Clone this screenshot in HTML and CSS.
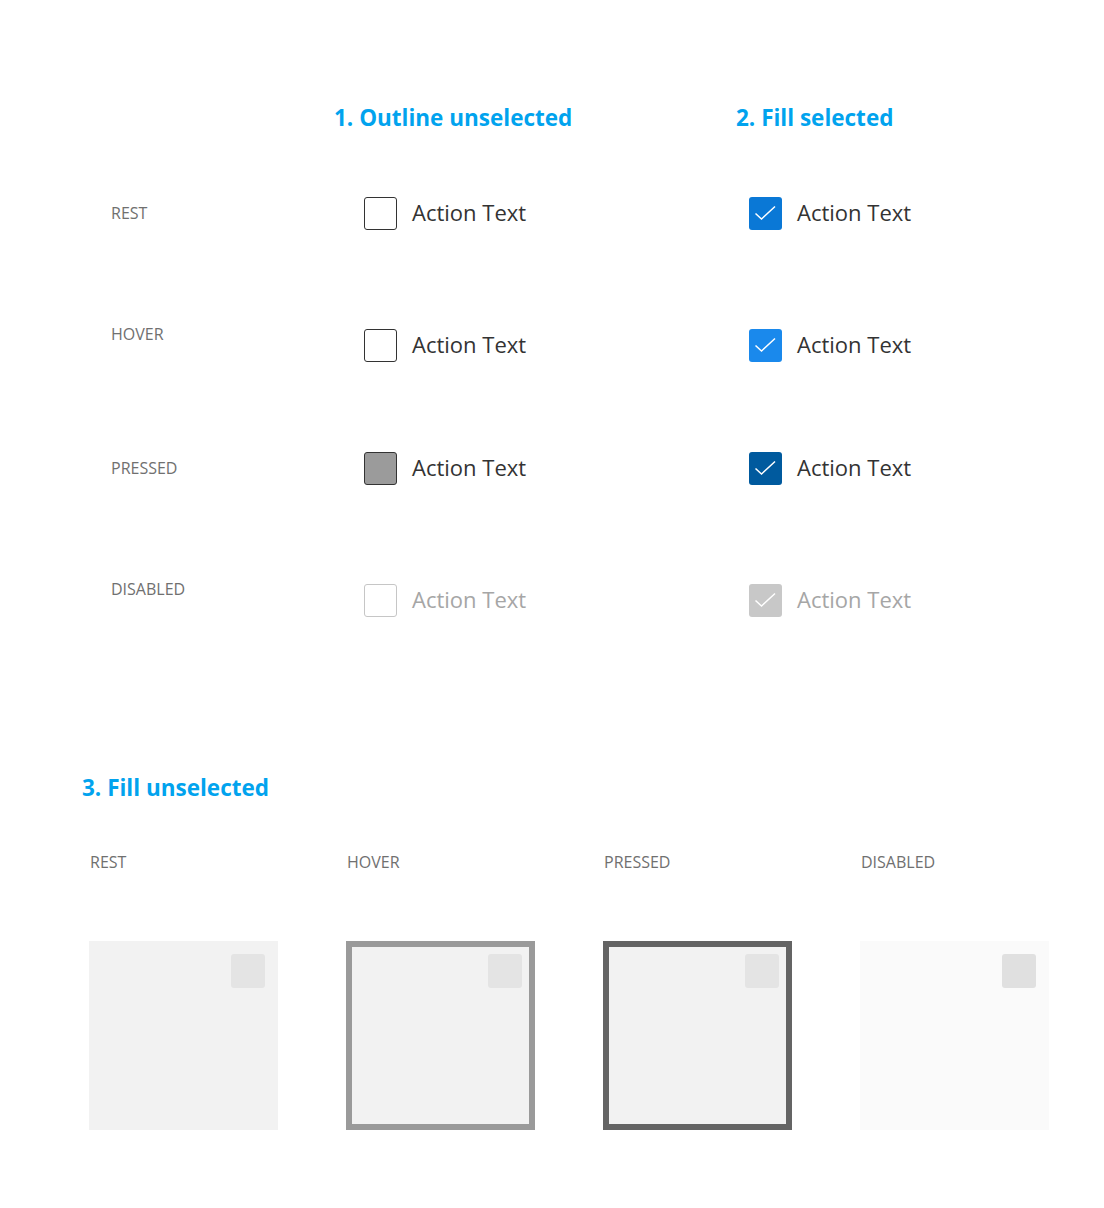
FILE: index.html
```html
<!DOCTYPE html>
<html>
<head>
<meta charset="utf-8">
<link rel="stylesheet" href="styles.css">
</head>
<body>
<div class="page">
  <div class="headings">
    <h2 class="heading h1">1. Outline unselected</h2>
    <h2 class="heading h2">2. Fill selected</h2>
  </div>

  <div class="states">
    <div class="label">REST</div>
    <div class="cell"><span class="box"></span><span class="txt">Action Text</span></div>
    <div class="cell"><span class="box checked rest"><svg viewBox="0 0 33 33"><path d="M6.5 16.5 L12.5 22 L26 9.5"/></svg></span><span class="txt">Action Text</span></div>

    <div class="label up">HOVER</div>
    <div class="cell"><span class="box"></span><span class="txt">Action Text</span></div>
    <div class="cell"><span class="box checked hover"><svg viewBox="0 0 33 33"><path d="M6.5 16.5 L12.5 22 L26 9.5"/></svg></span><span class="txt">Action Text</span></div>

    <div class="label">PRESSED</div>
    <div class="cell"><span class="box pressed"></span><span class="txt">Action Text</span></div>
    <div class="cell"><span class="box checked pressed-sel"><svg viewBox="0 0 33 33"><path d="M6.5 16.5 L12.5 22 L26 9.5"/></svg></span><span class="txt">Action Text</span></div>

    <div class="label up">DISABLED</div>
    <div class="cell disabled"><span class="box"></span><span class="txt">Action Text</span></div>
    <div class="cell disabled"><span class="box checked dis"><svg viewBox="0 0 33 33"><path d="M6.5 16.5 L12.5 22 L26 9.5"/></svg></span><span class="txt">Action Text</span></div>
  </div>

  <h2 class="heading h3">3. Fill unselected</h2>

  <div class="tiles">
    <div class="tile-col">
      <div class="tlabel">REST</div>
      <div class="tile"><span class="mini"></span></div>
    </div>
    <div class="tile-col">
      <div class="tlabel">HOVER</div>
      <div class="tile t-hover"><span class="mini"></span></div>
    </div>
    <div class="tile-col">
      <div class="tlabel">PRESSED</div>
      <div class="tile t-pressed"><span class="mini"></span></div>
    </div>
    <div class="tile-col">
      <div class="tlabel">DISABLED</div>
      <div class="tile t-disabled"><span class="mini"></span></div>
    </div>
  </div>
</div>
</body>
</html>
```

FILE: styles.css
```css
* { box-sizing: border-box; }
html, body { margin: 0; padding: 0; background: #fff; }
body { font-family: "Open Sans", "Noto Sans", sans-serif; color: #333; }
.page { width: 1104px; height: 1208px; }

.heading {
  margin: 0;
  font-size: 22.5px;
  font-weight: 700;
  line-height: 34px;
  color: #01a3ee;
  white-space: nowrap;
}
.headings {
  display: flex;
  padding: 101px 0 0 334px;
}
.headings .h1 { width: 402px; }

.states {
  margin: 45px 0 0 111px;
  display: grid;
  grid-template-columns: 253px 385px 200px;
  grid-template-rows: 132px 123px 132px 66px;
}
.label, .cell {
  height: 66px;
  display: flex;
  align-items: center;
}
.label {
  font-size: 16px;
  color: #707070;
}
.label.up { transform: translateY(-11px); }

.box {
  width: 33px;
  height: 33px;
  border: 1.5px solid #333;
  border-radius: 3px;
  background: #fff;
  display: flex;
  align-items: center;
  justify-content: center;
  flex: none;
}
.box svg { width: 33px; height: 33px; display: block; }
.box svg path { fill: none; stroke: #fff; stroke-width: 1.5; }
.box.pressed { background: #9b9b9b; }
.box.checked { border: none; }
.box.rest { background: #0a78d6; }
.box.hover { background: #1a89ec; }
.box.pressed-sel { background: #005a9e; }
.box.dis { background: #c8c8c8; }

.txt {
  margin-left: 15px;
  font-size: 22px;
  color: #333;
  position: relative;
  top: -1px;
}
.cell.disabled .box:not(.checked) { border-color: #c6c6c6; }
.cell.disabled .txt { color: #a6a6a6; }

.h3 { margin: 138px 0 0 82px; }

.tiles {
  margin: 46px 0 0 89px;
  display: grid;
  grid-template-columns: repeat(4, 189px);
  column-gap: 68px;
}
.tlabel {
  height: 22px;
  line-height: 22px;
  font-size: 16px;
  color: #707070;
  padding-left: 1px;
}
.tile {
  position: relative;
  margin-top: 68px;
  width: 189px;
  height: 189px;
  background: #f2f2f2;
}
.t-hover { box-shadow: inset 0 0 0 6px #9a9a9a; }
.t-pressed { box-shadow: inset 0 0 0 6px #646464; }
.t-disabled { background: #fafafa; }
.mini {
  position: absolute;
  top: 13px;
  right: 13px;
  width: 34px;
  height: 34px;
  border-radius: 3px;
  background: #e4e4e4;
}
.t-disabled .mini { background: #e0e0e0; }
```
